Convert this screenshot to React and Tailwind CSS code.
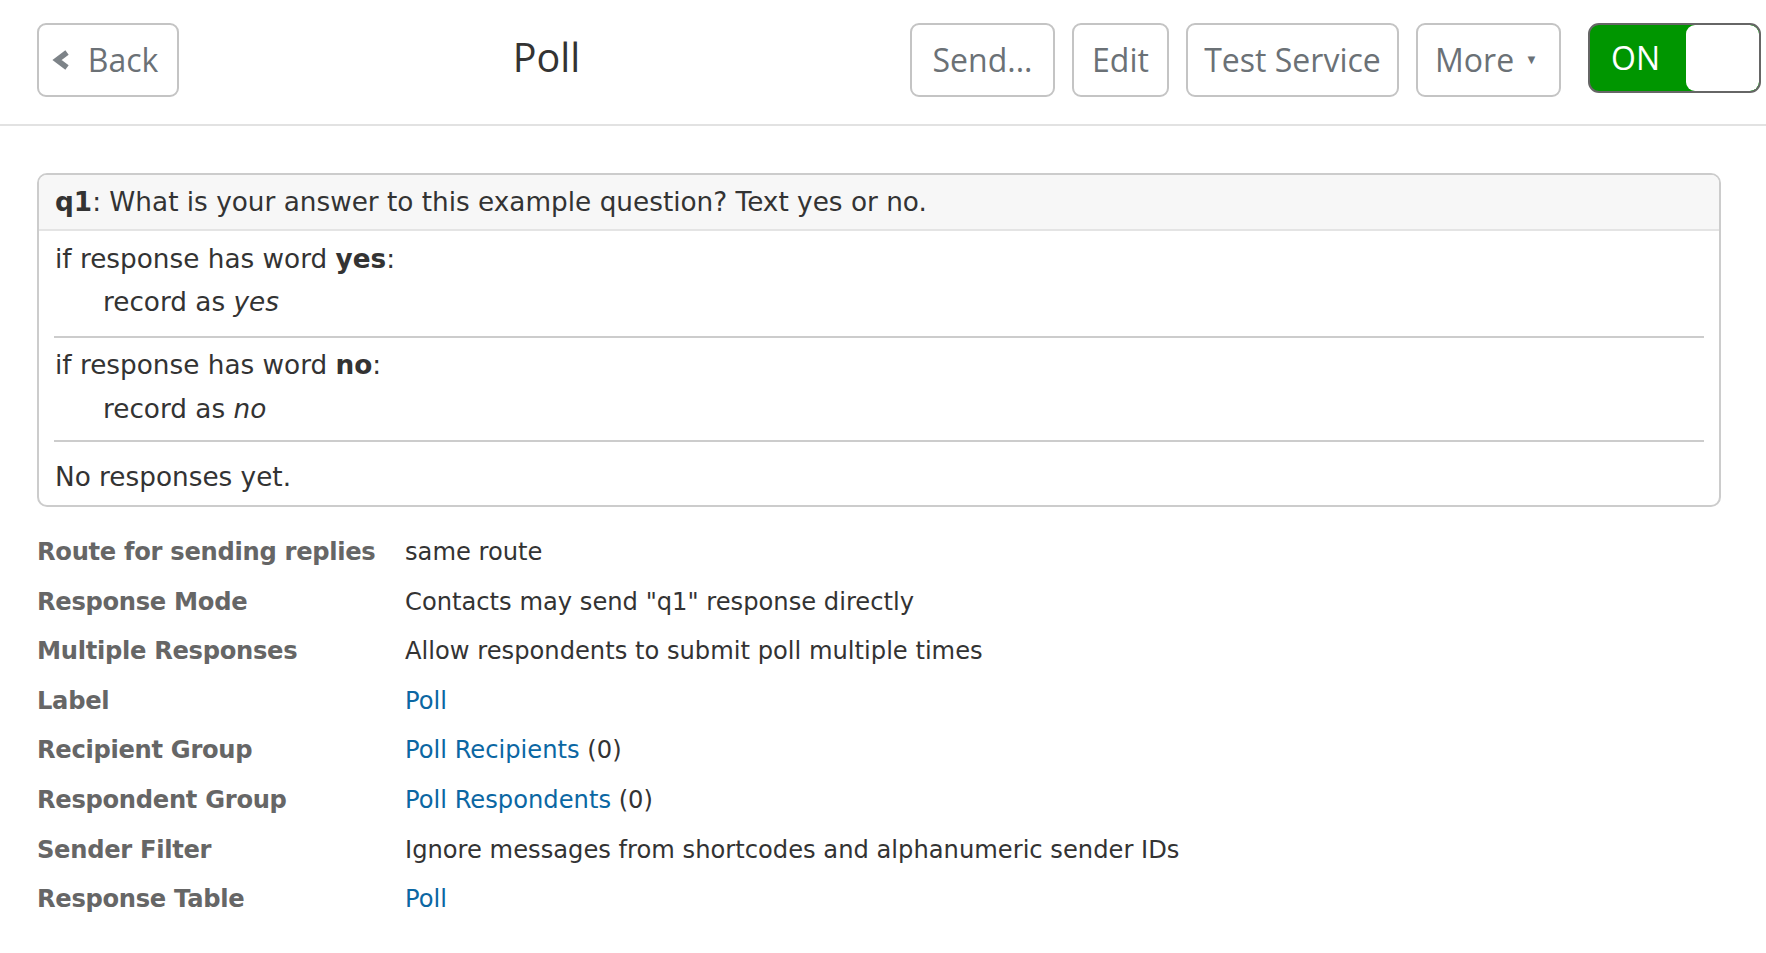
const Chevron = () => (
  <svg width="18" height="20" viewBox="0 0 18 20" className="mr-[18px]">
    <polyline points="15,2.5 5,10 15,17.5" fill="none" stroke="#7d8388" strokeWidth="5.5" strokeLinejoin="miter" />
  </svg>
);

const Btn = ({ className = '', children }) => (
  <button
    className={`flex h-[74px] items-center justify-center rounded-[9px] border-2 border-[#c4c4c4] bg-white text-[32px] text-[#6b7176] ${className}`}
  >
    {children}
  </button>
);

const details = [
  ['Route for sending replies', <>same route</>],
  ['Response Mode', <>Contacts may send "q1" response directly</>],
  ['Multiple Responses', <>Allow respondents to submit poll multiple times</>],
  ['Label', <a className="text-[#0b67a3]">Poll</a>],
  ['Recipient Group', <><a className="text-[#0b67a3]">Poll Recipients</a> (0)</>],
  ['Respondent Group', <><a className="text-[#0b67a3]">Poll Respondents</a> (0)</>],
  ['Sender Filter', <>Ignore messages from shortcodes and alphanumeric sender IDs</>],
  ['Response Table', <a className="text-[#0b67a3]">Poll</a>],
];

export default function App() {
  return (
    <div className="min-h-screen bg-white font-['DejaVu_Sans',Verdana,sans-serif] text-[#333]">
      <header className="flex items-start border-b-2 border-[#e2e2e2] pt-[23px] pb-[27px] pl-[37px] pr-[5px] font-['Open_Sans',sans-serif]">
        <Btn className="w-[142px] pr-[6px]">
          <Chevron />
          Back
        </Btn>
        <div className="flex flex-1 justify-center pt-[14px] pl-[4px] text-[39.5px] leading-[40px] text-[#333]">Poll</div>
        <div className="flex items-start gap-[17px]">
          <Btn className="w-[145px]">Send...</Btn>
          <Btn className="w-[97px]">Edit</Btn>
          <Btn className="w-[213px]">Test Service</Btn>
          <Btn className="w-[145px] pr-[4px]">
            More
            <span className="ml-[11px] text-[13px]">▼</span>
          </Btn>
        </div>
        <div className="ml-[27px] flex h-[70px] w-[173px] overflow-hidden rounded-[11px] border-2 border-[#666] bg-[#009600]">
          <div className="flex flex-1 items-center pl-[21px] text-[32px] text-white">ON</div>
          <div className="w-[73px] rounded-[9px] bg-white"></div>
        </div>
      </header>

      <main className="ml-[37px] w-[1684px] pt-[47px]">
        <section className="overflow-hidden rounded-[10px] border-2 border-[#cccccc] text-[26.3px]">
          <div className="border-b-2 border-[#e4e4e4] bg-[#f7f7f7] px-[16px] leading-[54px]">
            <b>q1</b>: What is your answer to this example question? Text yes or no.
          </div>
          <div className="px-[15px]">
            <div className="pt-[7px] pb-[12px] pl-[1px] leading-[43px]">
              <div>
                if response has word <b>yes</b>:
              </div>
              <div className="pl-[48px]">
                record as <i>yes</i>
              </div>
            </div>
            <div className="h-[2px] bg-[#cccccc]"></div>
            <div className="pt-[5px] pb-[9px] pl-[1px] leading-[44px]">
              <div>
                if response has word <b>no</b>:
              </div>
              <div className="pl-[48px]">
                record as <i>no</i>
              </div>
            </div>
            <div className="h-[2px] bg-[#cccccc]"></div>
            <div className="pt-[14px] pb-[6px] pl-[1px] leading-[43px]">No responses yet.</div>
          </div>
        </section>

        <div className="mt-[21px] grid grid-cols-[368px_1fr] text-[24.2px] leading-[49.6px]">
          {details.map(([label, value]) => (
            <div key={label} className="contents">
              <div className="font-bold tracking-[-0.3px] text-[#666]">{label}</div>
              <div>{value}</div>
            </div>
          ))}
        </div>
      </main>
    </div>
  );
}
